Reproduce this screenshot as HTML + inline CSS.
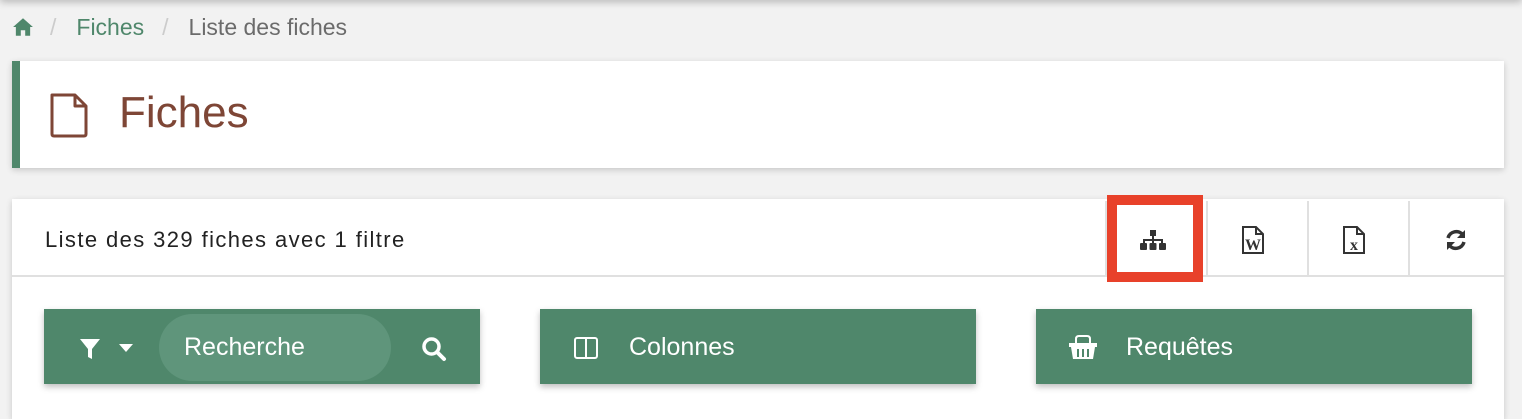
<!DOCTYPE html>
<html><head><meta charset="utf-8"><style>
*{box-sizing:border-box;margin:0;padding:0}
body{width:1522px;height:402px;overflow:hidden;background:#f2f2f2;font-family:"Liberation Sans",sans-serif;position:relative}
.topsh{position:absolute;left:0;top:-10px;width:1522px;height:10px;box-shadow:0 2px 8px rgba(0,0,0,.25)}
.bc{position:absolute;top:13px;left:12px;font-size:23px;display:flex;align-items:center;height:28px}
.card{position:absolute;left:12px;width:1492px;background:#fff;box-shadow:0 2px 6px rgba(0,0,0,.18)}
.h{top:61px;height:107px;border-left:8px solid #4f876b}
.h .t{position:absolute;left:99px;top:27px;font-size:44px;color:#7e4636}
.l{top:199px;height:220px}
.row{height:78px;border-bottom:2px solid #e0e0e0;position:relative}
.row .txt{position:absolute;left:33px;top:28px;font-size:22px;letter-spacing:1.4px;color:#222}
.div{position:absolute;top:2px;width:2px;height:74px;background:#e0e0e0}
.ic{position:absolute;top:26px}
.btn{position:absolute;top:309px;height:75px;width:436px;background:#4f876b;box-shadow:0 3px 6px rgba(0,0,0,.25);color:#fff;font-size:25px}
.btn span{position:absolute;top:24px}
</style></head><body>
<div class="topsh"></div>
<div class="bc">
<svg width="22" height="20" viewBox="0 0 20 18"><path d="M10 1 L1 9 L3.5 9 L3.5 17 L8 17 L8 12 L12 12 L12 17 L16.5 17 L16.5 9 L19 9 Z" fill="#4f876b"/></svg>
<span style="color:#ccc;margin:0 20px 0 16px">/</span><span style="color:#4f876b">Fiches</span>
<span style="color:#ccc;margin:0 20px 0 18px">/</span><span style="color:#6b6b6b">Liste des fiches</span>
</div>
<div class="card h">
<svg style="position:absolute;left:29px;top:32px" width="40" height="45" viewBox="0 0 40 45"><path d="M3 2 H26 L37 13 V41 Q37 43 35 43 H5 Q3 43 3 41 Z M26 2 V13 H37" fill="none" stroke="#7e4636" stroke-width="3" stroke-linejoin="round"/></svg>
<div class="t">Fiches</div>
</div>
<div class="card l">
<div class="row">
<div class="txt">Liste des 329 fiches avec 1 filtre</div>
<div class="div" style="left:1093px"></div><div class="div" style="left:1194px"></div><div class="div" style="left:1295px"></div><div class="div" style="left:1396px"></div>
<svg class="ic" style="left:1127px;top:30px" width="28" height="22" viewBox="0 0 28 22"><rect x="11" y="1" width="6" height="6" fill="#333"/><path d="M14 7V11 M5 15V11H23V15 M14 11V15" stroke="#333" stroke-width="2" fill="none"/><rect x="1" y="14" width="7" height="7" rx="1" fill="#333"/><rect x="10.5" y="14" width="7" height="7" rx="1" fill="#333"/><rect x="20" y="14" width="7" height="7" rx="1" fill="#333"/></svg>
<svg class="ic" style="left:1229px;top:26px" width="24" height="30" viewBox="0 0 24 30"><path d="M2 2H15L22 9V28H2Z M15 2V9H22" fill="none" stroke="#333" stroke-width="2"/><text x="12" y="25" font-family="Liberation Serif" font-size="16" font-weight="bold" text-anchor="middle" fill="#333">W</text></svg>
<svg class="ic" style="left:1330px;top:26px" width="24" height="30" viewBox="0 0 24 30"><path d="M2 2H15L22 9V28H2Z M15 2V9H22" fill="none" stroke="#333" stroke-width="2"/><text x="12" y="25" font-family="Liberation Serif" font-size="16" font-weight="bold" text-anchor="middle" fill="#333">x</text></svg>
<svg class="ic" style="left:1432px;top:29px" width="24" height="24" viewBox="0 0 24 24"><path d="M4 10A8.5 8.5 0 0 1 19 7" stroke="#333" stroke-width="3.5" fill="none"/><path d="M21 2V10H13Z" fill="#333"/><path d="M20 14A8.5 8.5 0 0 1 5 17" stroke="#333" stroke-width="3.5" fill="none"/><path d="M3 22V14H11Z" fill="#333"/></svg>
</div>
</div>
<div style="position:absolute;left:1107px;top:195px;width:96px;height:87px;border:10px solid #e8412a"></div>
<div class="btn" style="left:44px">
<svg style="position:absolute;left:35px;top:29px" width="22" height="22" viewBox="0 0 22 22"><path d="M1 1H21L13 11V21L9 19V11Z" fill="#fff"/></svg>
<svg style="position:absolute;left:75px;top:35px" width="14" height="8"><path d="M0 0H14L7 8Z" fill="#fff"/></svg>
<div style="position:absolute;left:115px;top:5px;width:232px;height:67px;border-radius:34px;background:#5f957b"></div>
<span style="left:140px">Recherche</span>
<svg style="position:absolute;left:377px;top:27px" width="26" height="26" viewBox="0 0 26 26"><circle cx="10.5" cy="10.5" r="7.5" stroke="#fff" stroke-width="3.5" fill="none"/><path d="M16 16L23 23" stroke="#fff" stroke-width="4" stroke-linecap="round"/></svg>
</div>
<div class="btn" style="left:540px">
<svg style="position:absolute;left:34px;top:28px" width="24" height="22" viewBox="0 0 24 22"><rect x="1" y="1" width="22" height="20" rx="2" stroke="#fff" stroke-width="2" fill="none"/><path d="M12 1V21" stroke="#fff" stroke-width="2"/></svg>
<span style="left:89px">Colonnes</span>
</div>
<div class="btn" style="left:1036px">
<svg style="position:absolute;left:32px;top:24px" width="30" height="28" viewBox="0 0 30 28"><path d="M8 11V6Q8 3 11 3H19Q22 3 22 6V11" stroke="#fff" stroke-width="2" fill="none"/><rect x="1" y="10" width="28" height="4" fill="#fff"/><path d="M3 14L5 26H25L27 14Z" fill="#fff"/><path d="M10 16V24M15 16V24M20 16V24" stroke="#4f876b" stroke-width="2"/></svg>
<span style="left:90px">Requêtes</span>
</div>
</body></html>
